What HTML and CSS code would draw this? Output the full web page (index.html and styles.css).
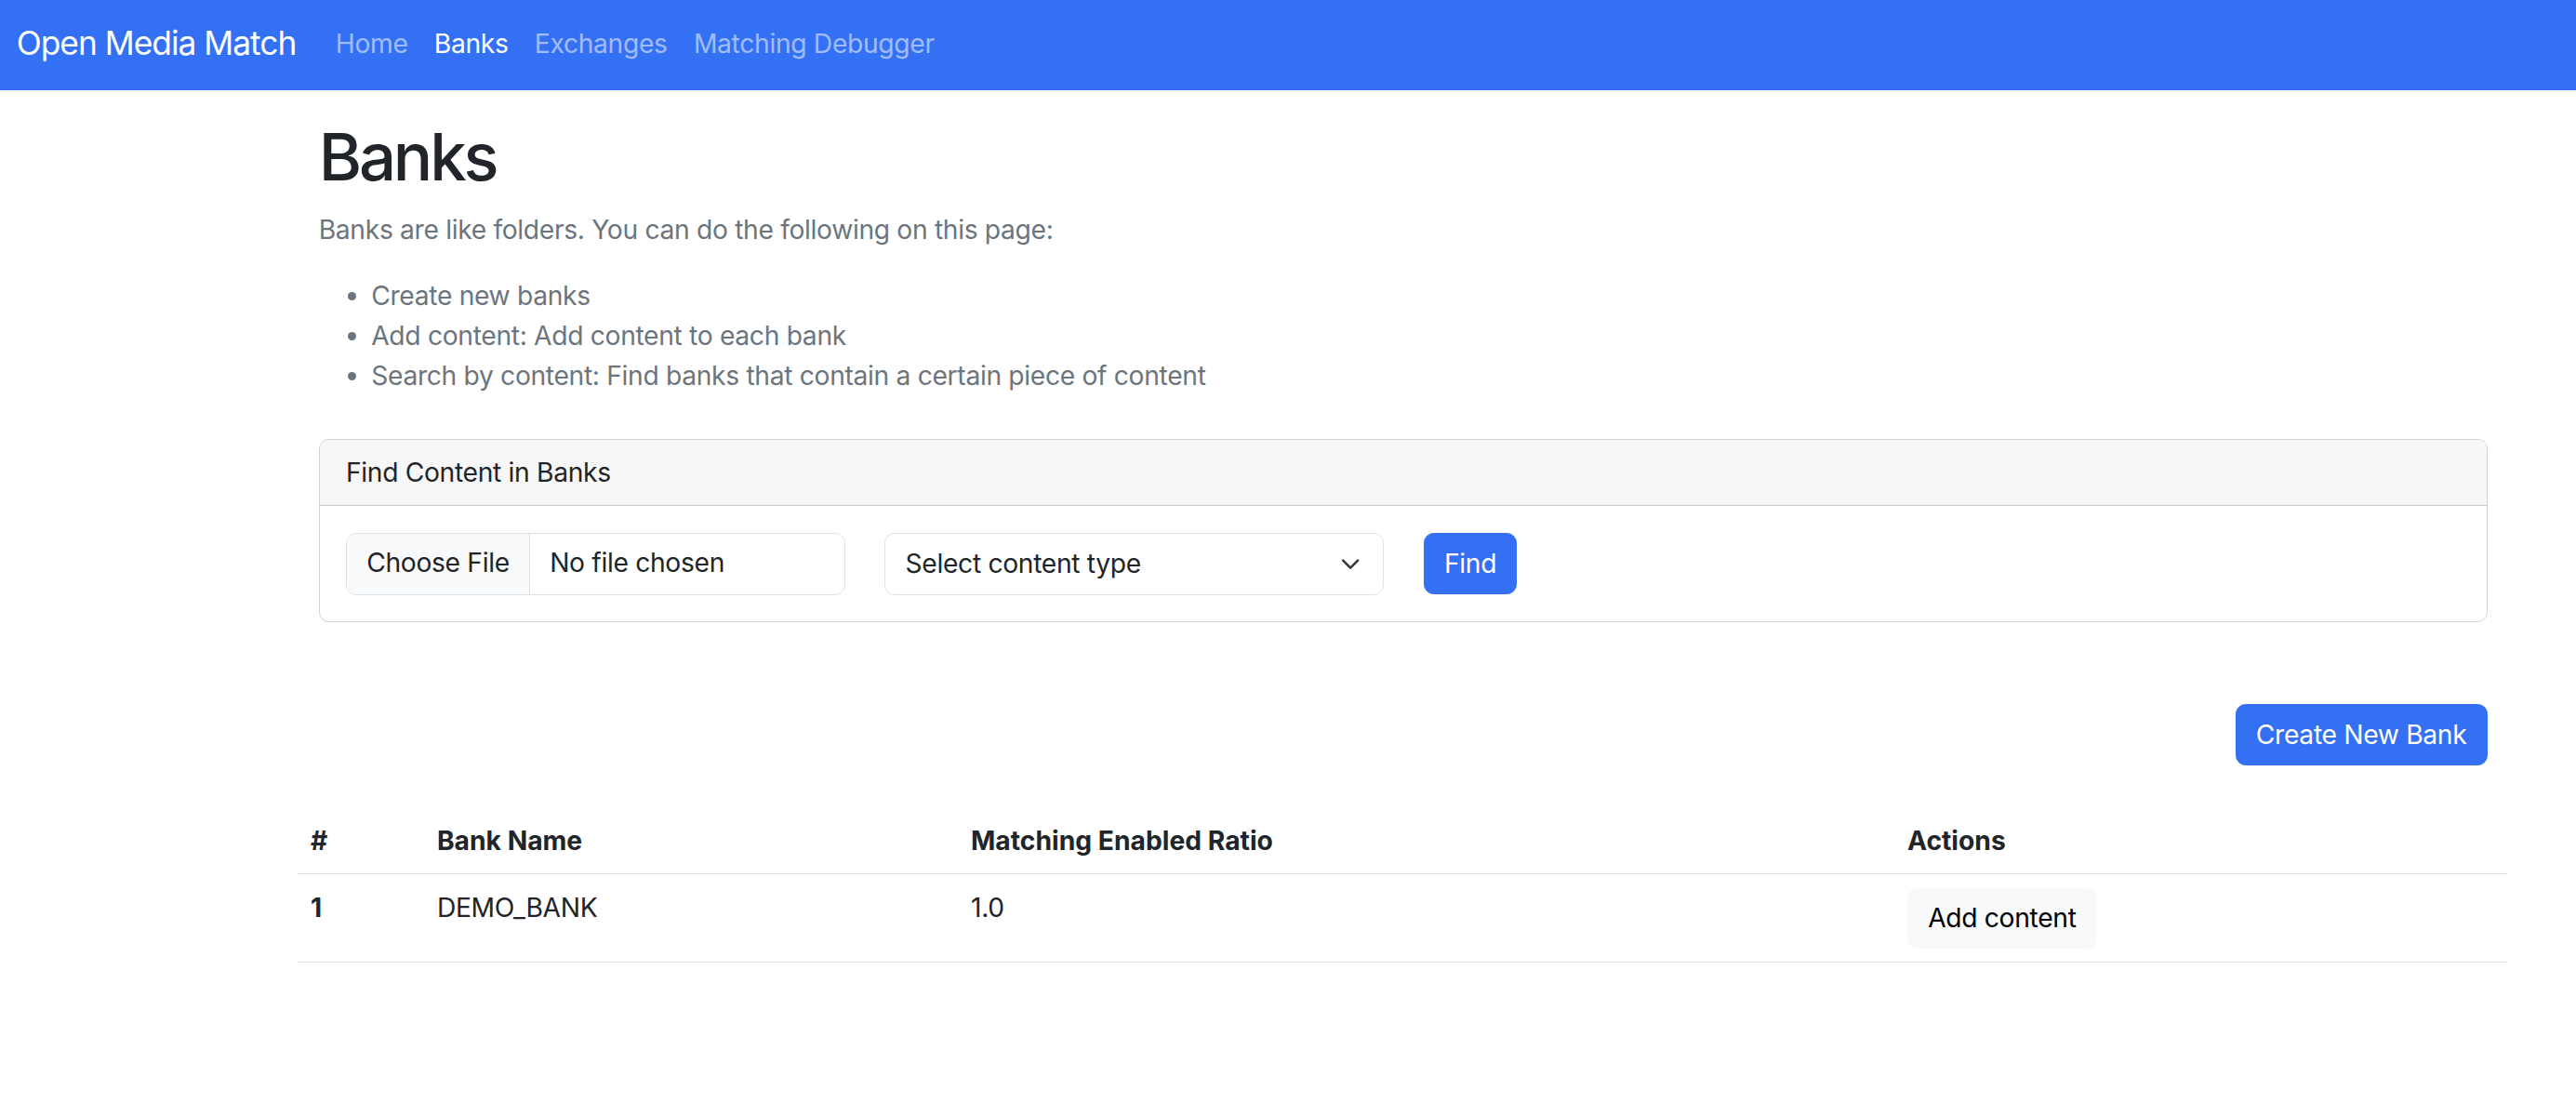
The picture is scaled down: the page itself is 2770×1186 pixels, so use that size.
FILE: index.html
```html
<!DOCTYPE html>
<html lang="en">
<head>
<meta charset="utf-8">
<title>Banks - Open Media Match</title>
<link rel="stylesheet" href="styles.css">
</head>
<body>
<nav class="navbar">
  <a class="brand" href="#">Open Media Match</a>
  <ul class="nav">
    <li><a class="nav-link" href="#">Home</a></li>
    <li><a class="nav-link active" href="#">Banks</a></li>
    <li><a class="nav-link" href="#">Exchanges</a></li>
    <li><a class="nav-link" href="#">Matching Debugger</a></li>
  </ul>
</nav>
<main class="page">
  <h1 class="title">Banks</h1>
  <p class="muted intro">Banks are like folders. You can do the following on this page:</p>
  <ul class="muted features">
    <li>Create new banks</li>
    <li>Add content: Add content to each bank</li>
    <li>Search by content: Find banks that contain a certain piece of content</li>
  </ul>
  <section class="card">
    <div class="card-header">Find Content in Banks</div>
    <div class="card-body">
      <form class="find-form">
        <label class="file-input">
          <span class="file-btn">Choose File</span>
          <span class="file-name">No file chosen</span>
        </label>
        <div class="select">
          <span>Select content type</span>
          <svg class="chevron" viewBox="0 0 16 16" width="16" height="12" aria-hidden="true"><path fill="none" stroke="#343a40" stroke-linecap="round" stroke-linejoin="round" stroke-width="2" d="m2 5 6 6 6-6"/></svg>
        </div>
        <button type="button" class="btn btn-primary">Find</button>
      </form>
    </div>
  </section>
  <div class="toolbar">
    <button type="button" class="btn btn-primary">Create New Bank</button>
  </div>
  <table class="table">
    <thead>
      <tr>
        <th class="col-num">#</th>
        <th class="col-name">Bank Name</th>
        <th class="col-ratio">Matching Enabled Ratio</th>
        <th class="col-actions">Actions</th>
      </tr>
    </thead>
    <tbody>
      <tr>
        <th>1</th>
        <td>DEMO_BANK</td>
        <td>1.0</td>
        <td><button type="button" class="btn btn-light">Add content</button></td>
      </tr>
    </tbody>
  </table>
</main>
</body>
</html>
```

FILE: styles.css
```css
* { box-sizing: border-box; }

html { background: #fff; }

body {
  margin: 0;
  zoom: 1.76658;
  font-family: Inter, "Noto Sans", "Liberation Sans", sans-serif;
  font-size: 16px;
  line-height: 24px;
  letter-spacing: -0.012em;
  color: #212529;
}

/* Navbar */
.navbar {
  height: 55px;
  padding: 0 10px 2px;
  background: #3470f4;
  display: flex;
  align-items: center;
}
.brand {
  font-size: 20px;
  line-height: 30px;
  padding: 5px 0;
  margin-right: 16px;
  letter-spacing: -0.028em;
  color: #fff;
  text-decoration: none;
}
.nav {
  display: flex;
  list-style: none;
  margin: 0;
  padding: 0;
}
.nav-link {
  display: block;
  padding: 8px;
  color: rgba(255, 255, 255, 0.55);
  text-decoration: none;
}
.nav-link.active { color: #fff; }

/* Page */
.page {
  width: 1320px;
  margin-left: 194px;
  padding-top: 17px;
}
.title {
  margin: 0 0 8px;
  font-size: 40px;
  line-height: 48px;
  font-weight: 500;
  letter-spacing: -0.045em;
}
.muted { color: #6c757d; }
.intro { margin: 0 0 16px; }
.features {
  margin: 0;
  padding-left: 32px;
}
.features li { line-height: 24.5px; }

/* Card */
.card {
  margin-top: 25.5px;
  border: 1px solid rgba(0, 0, 0, 0.175);
  border-radius: 6px;
  overflow: hidden;
}
.card-header {
  padding: 8px 16px;
  background: #f7f7f7;
  border-bottom: 1px solid rgba(0, 0, 0, 0.175);
}
.card-body { padding: 16px; }
.find-form {
  display: flex;
  gap: 24px;
  align-items: center;
}
.file-input {
  width: 304px;
  height: 38px;
  display: flex;
  border: 1px solid #dee2e6;
  border-radius: 6px;
  overflow: hidden;
  color: #212529;
}
.file-btn {
  padding: 6px 12px;
  background: #f8f9fa;
  border-right: 1px solid #dee2e6;
}
.file-name { padding: 6px 12px; }
.select {
  width: 304px;
  height: 38px;
  padding: 6px 12px;
  display: flex;
  align-items: center;
  justify-content: space-between;
  border: 1px solid #dee2e6;
  border-radius: 6px;
}
.chevron { flex: none; }

/* Buttons */
.btn {
  font: inherit;
  line-height: 24px;
  letter-spacing: inherit;
  padding: 6px 12px;
  border-radius: 6px;
  border: 1px solid transparent;
  cursor: pointer;
}
.btn-primary {
  background: #3470f4;
  border-color: #3470f4;
  color: #fff;
}
.btn-light {
  background: #f8f9fa;
  border-color: #f8f9fa;
  color: #000;
}

.toolbar {
  margin-top: 50px;
  display: flex;
  justify-content: flex-end;
}

/* Table */
.table {
  margin: 26px -12px 0 -13px;
  width: calc(100% + 25px);
  border-collapse: collapse;
  table-layout: fixed;
  vertical-align: top;
}
.table thead,
.table tbody,
.table tr { vertical-align: inherit; }
.table th,
.table td {
  padding: 8px;
  text-align: left;
  vertical-align: inherit;
  border-bottom: 1px solid #dee2e6;
  font-weight: 400;
}
.table th {
  font-weight: 700;
  letter-spacing: 0;
}
.col-num { width: 77px; }
.col-name { width: 325px; }
.col-ratio { width: 570px; }
```
